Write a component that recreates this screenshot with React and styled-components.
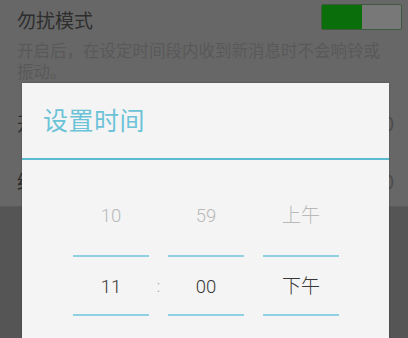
import styled, { createGlobalStyle } from "styled-components";

const GlobalStyle = createGlobalStyle`
  html, body {
    margin: 0;
    padding: 0;
    background: #555555;
  }
  body {
    font-family: "Noto Sans CJK SC", "Noto Sans", sans-serif;
  }
`;

const Screen = styled.div`
  position: relative;
  width: 408px;
  height: 338px;
  overflow: hidden;
  background: #555555;
`;

const SettingsList = styled.div`
  background: #676767;
  height: 206px;
  border-bottom: 1px solid #5a5a5a;
`;

const SettingRow = styled.div`
  display: flex;
  justify-content: space-between;
  align-items: flex-start;
  padding: ${(p) => p.$pad || "5px 6px 0 17px"};
  height: ${(p) => p.$height || "auto"};
  box-sizing: border-box;
`;

const RowTitle = styled.div`
  font-size: 19px;
  line-height: 24px;
  color: #2e2e2e;
  margin-top: ${(p) => p.$top || "0"};
`;

const RowValue = styled.div`
  font-size: 19px;
  line-height: 24px;
  color: #4c4c4c;
  margin-top: ${(p) => p.$top || "0"};
`;

const Description = styled.div`
  width: 372px;
  padding-left: 17px;
  margin-top: 8px;
  font-size: 16.5px;
  line-height: 21px;
  color: #595959;
`;

const Toggle = styled.div`
  display: flex;
  width: 81px;
  height: 26px;
  box-sizing: border-box;
  border: 1.5px solid #3f5a3f;
  border-radius: 2px;
  overflow: hidden;
  margin-top: -1px;
`;

const ToggleHalf = styled.div`
  flex: 1;
  background: ${(p) => (p.$on ? "#0a6f0a" : "#787878")};
`;

const Dialog = styled.div`
  position: absolute;
  left: 22px;
  top: 83px;
  width: 367px;
  height: 280px;
  background: #f4f4f4;
  box-shadow: 0 0 2px rgba(0, 0, 0, 0.25);
`;

const DialogHeader = styled.div`
  height: 75px;
  display: flex;
  align-items: center;
  padding-left: 21px;
  border-bottom: 2.5px solid #5cbbd1;
`;

const DialogTitle = styled.div`
  font-size: 25px;
  color: #6cc3d8;
  letter-spacing: 0.5px;
  margin-top: -3px;
`;

const Picker = styled.div`
  display: grid;
  grid-template-columns: 76px 19px 76px 19px 76px;
  padding: 36px 0 0 51px;
`;

const Column = styled.div`
  display: flex;
  flex-direction: column;
  align-items: stretch;
`;

const Item = styled.div`
  height: 40px;
  line-height: 40px;
  text-align: center;
  font-family: "Roboto", "Noto Sans CJK SC", sans-serif;
  font-weight: 300;
  font-size: ${(p) => (p.$cjk ? "19px" : "18.5px")};
  color: ${(p) => (p.$selected ? "#383838" : "#b9b9b9")};
`;

const Line = styled.div`
  height: 2px;
  background: ${(p) => (p.$hidden ? "transparent" : "#8fd0e2")};
  margin-top: ${(p) => p.$top};
`;

const Colon = styled(Item)`
  color: #9a9a9a;
  font-size: 16px;
`;

const columns = [
  { prev: "10", current: "11" },
  { prev: "59", current: "00" },
  { prev: "上午", current: "下午", cjk: true },
];

const PickerColumn = ({ prev, current, cjk }) => (
  <Column>
    <Item $cjk={cjk}>{prev}</Item>
    <Line $top="19px" />
    <Item $cjk={cjk} $selected style={{ marginTop: 10 }}>
      {current}
    </Item>
    <Line $top="7px" />
  </Column>
);

const App = () => {
  return (
    <>
      <GlobalStyle />
      <Screen>
        <SettingsList>
          <SettingRow>
            <RowTitle $top="3px">勿扰模式</RowTitle>
            <Toggle>
              <ToggleHalf $on />
              <ToggleHalf />
            </Toggle>
          </SettingRow>
          <Description>开启后，在设定时间段内收到新消息时不会响铃或振动。</Description>
          <SettingRow $height="60px" $pad="0 14px 0 17px">
            <RowTitle $top="29px">开始时间</RowTitle>
            <RowValue $top="29px">23:00</RowValue>
          </SettingRow>
          <SettingRow $height="62px" $pad="0 14px 0 17px">
            <RowTitle $top="27px">结束时间</RowTitle>
            <RowValue $top="27px">08:00</RowValue>
          </SettingRow>
        </SettingsList>

        <Dialog>
          <DialogHeader>
            <DialogTitle>设置时间</DialogTitle>
          </DialogHeader>
          <Picker>
            <PickerColumn {...columns[0]} />
            <Column>
              <Item />
              <Line $top="19px" $hidden />
              <Colon style={{ marginTop: 10 }}>:</Colon>
            </Column>
            <PickerColumn {...columns[1]} />
            <Column />
            <PickerColumn {...columns[2]} />
          </Picker>
        </Dialog>
      </Screen>
    </>
  );
};

export default App;
